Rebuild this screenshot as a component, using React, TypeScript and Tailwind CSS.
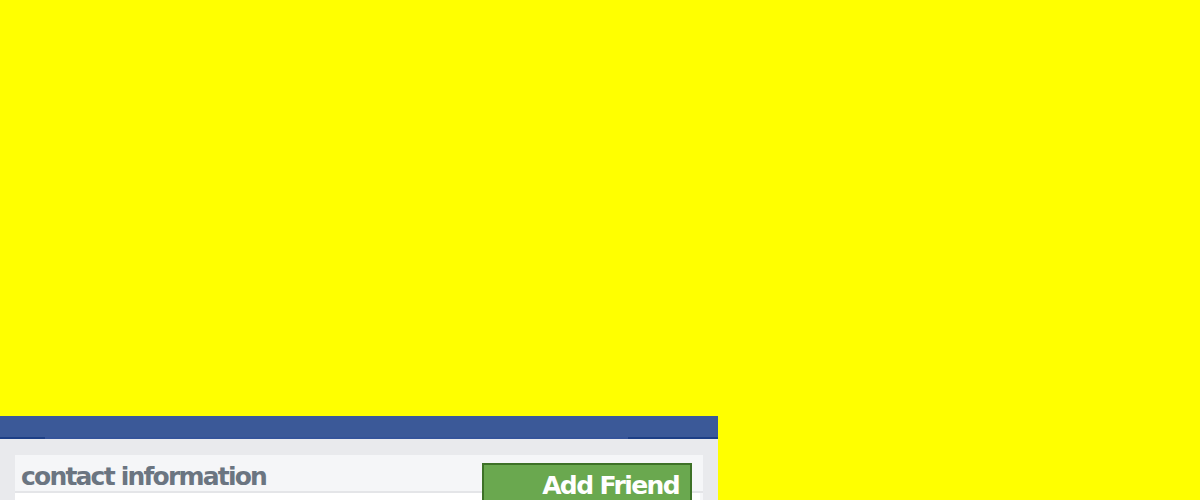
export default function App() {
  return (
    <div className="w-[1200px] h-[500px] bg-[#ffff00] overflow-hidden flex flex-col" style={{ fontFamily: '"DejaVu Sans", Verdana, sans-serif' }}>
      <div className="h-[416px] shrink-0" />
      <div className="w-[718px] flex flex-col shrink-0">
        <div className="h-[21px] bg-[#3b5998]" />
        <div className="h-[2px] flex">
          <div className="w-[45px] bg-[#1d3f86]" />
          <div className="flex-1 bg-[#35549a]" />
          <div className="w-[90px] bg-[#1d3f86]" />
        </div>
        <div className="bg-[#e9eaed] px-[15px] pt-[16px] h-[200px]">
          <div className="relative bg-[#f5f6f8]">
            <div className="h-[36px] flex items-start pl-[6px] pt-[9px]">
              <span className="text-[25px] font-bold text-[#6b7581] leading-none tracking-[-1.8px]">contact information</span>
            </div>
            <div className="h-[2px] bg-[#e4e5e8]" />
            <div className="h-[100px] bg-white mr-[3px]" />
            <div className="absolute left-[467px] top-[8px] w-[210px] h-[60px] bg-[#6aa84f] border-2 border-[#3d7127] flex justify-end items-start pr-[11px] pt-[8px]">
              <span className="text-[25px] font-bold text-white leading-none tracking-[-1.6px]">Add Friend</span>
            </div>
          </div>
        </div>
      </div>
    </div>
  );
}
